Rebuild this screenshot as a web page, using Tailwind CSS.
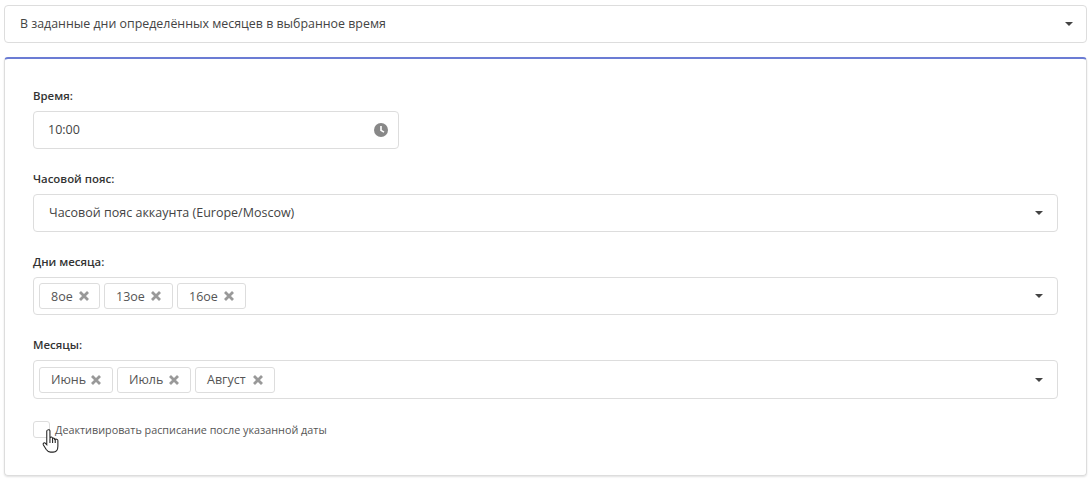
<!DOCTYPE html>
<html lang="en">
<head>
  <meta charset="UTF-8">
  <title>Расписание</title>
  <script src="https://cdn.jsdelivr.net/npm/@tailwindcss/browser@4"></script>
</head>
<body class="bg-white h-[481px] overflow-hidden font-['Open_Sans',sans-serif] text-[12.5px] text-[#444]">
  <div class="pl-[4px] pr-[4px] pt-[5px]">
    <!-- schedule type -->
    <div class="h-[38px] border border-[#ddd] rounded-[4px] flex items-center justify-between pl-[15px] pr-[13px]">
      <span class="text-[12.4px]">В заданные дни определённых месяцев в выбранное время</span>
      <span class="w-0 h-0 border-x-[4px] border-x-transparent border-t-[4px] border-t-[#444]"></span>
    </div>

    <div class="relative mt-[14px] h-[419px] border border-[#ddd] border-t-2 border-t-[#6b7cd4] rounded-[4px] shadow-[0_1px_2px_rgba(0,0,0,0.12)] pl-[28px] pr-[28px] pt-[29px]">
      <div class="h-[16px] leading-[15px] font-semibold text-[11.4px] text-[#333]">Время:</div>
      <div class="mt-[7px] w-[366px] h-[38px] border border-[#ddd] rounded-[4px] flex items-center justify-between pl-[14px] pr-[10px]">
        <span class="pt-[1px]">10:00</span>
        <svg class="w-[14px] h-[14px]" viewBox="0 0 13 13"><circle cx="6.5" cy="6.5" r="6.5" fill="#888"/><path d="M6.5 2.800V6.800L9.300 8.500" fill="none" stroke="#fff" stroke-width="1.500"/></svg>
      </div>

      <div class="mt-[22px] h-[16px] leading-[15px] font-semibold text-[11.4px] text-[#333]">Часовой пояс:</div>
      <div class="mt-[7px] h-[38px] border border-[#ddd] rounded-[4px] flex items-center justify-between pl-[15px] pr-[14px]">
        <span class="pt-[1px]">Часовой пояс аккаунта (Europe/Moscow)</span>
        <span class="w-0 h-0 border-x-[4px] border-x-transparent border-t-[4px] border-t-[#444]"></span>
      </div>

      <div class="mt-[22px] h-[16px] leading-[15px] font-semibold text-[11.4px] text-[#333]">Дни месяца:</div>
      <div class="mt-[7px] h-[38px] border border-[#ddd] rounded-[4px] flex items-center justify-between pl-[5px] pr-[14px]">
        <div class="flex gap-[4px]">
          <span class="w-[61px] h-[26px] border border-[#ddd] rounded-[3px] flex items-center justify-between pl-[11px] pr-[10px] text-[#555]"><span class="pt-[2px]">8ое</span> <svg class="w-[10px] h-[10px]" viewBox="0 0 10 10"><path d="M1 1L9 9M9 1L1 9" stroke="#999" stroke-width="2.800"/></svg></span>
          <span class="w-[69px] h-[26px] border border-[#ddd] rounded-[3px] flex items-center justify-between pl-[11px] pr-[11px] text-[#555]"><span class="pt-[2px]">13ое</span> <svg class="w-[10px] h-[10px]" viewBox="0 0 10 10"><path d="M1 1L9 9M9 1L1 9" stroke="#999" stroke-width="2.800"/></svg></span>
          <span class="w-[69px] h-[26px] border border-[#ddd] rounded-[3px] flex items-center justify-between pl-[11px] pr-[11px] text-[#555]"><span class="pt-[2px]">16ое</span> <svg class="w-[10px] h-[10px]" viewBox="0 0 10 10"><path d="M1 1L9 9M9 1L1 9" stroke="#999" stroke-width="2.800"/></svg></span>
        </div>
        <span class="w-0 h-0 border-x-[4px] border-x-transparent border-t-[4px] border-t-[#444]"></span>
      </div>

      <div class="mt-[22px] h-[16px] leading-[15px] font-semibold text-[11.4px] text-[#333]">Месяцы:</div>
      <div class="mt-[7px] h-[39px] border border-[#ddd] rounded-[4px] flex items-center justify-between pl-[5px] pr-[14px]">
        <div class="flex gap-[4px]">
          <span class="w-[74px] h-[26px] border border-[#ddd] rounded-[3px] flex items-center justify-between pl-[11px] pr-[11px] text-[#555]"><span class="pt-[2px]">Июнь</span> <svg class="w-[10px] h-[10px]" viewBox="0 0 10 10"><path d="M1 1L9 9M9 1L1 9" stroke="#999" stroke-width="2.800"/></svg></span>
          <span class="w-[74px] h-[26px] border border-[#ddd] rounded-[3px] flex items-center justify-between pl-[11px] pr-[11px] text-[#555]"><span class="pt-[2px]">Июль</span> <svg class="w-[10px] h-[10px]" viewBox="0 0 10 10"><path d="M1 1L9 9M9 1L1 9" stroke="#999" stroke-width="2.800"/></svg></span>
          <span class="w-[80px] h-[26px] border border-[#ddd] rounded-[3px] flex items-center justify-between pl-[11px] pr-[11px] text-[#555]"><span class="pt-[2px]">Август</span> <svg class="w-[10px] h-[10px]" viewBox="0 0 10 10"><path d="M1 1L9 9M9 1L1 9" stroke="#999" stroke-width="2.800"/></svg></span>
        </div>
        <span class="w-0 h-0 border-x-[4px] border-x-transparent border-t-[4px] border-t-[#444]"></span>
      </div>

      <div class="mt-[22px] flex items-center gap-[5px]">
        <span class="w-[17px] h-[17px] border border-[#ddd] rounded-[3px]"></span>
        <span class="pt-[1px] text-[10.8px] text-[#555]">Деактивировать расписание после указанной даты</span>
      </div>

      <!-- mouse pointer from the screen capture -->
      <svg class="absolute left-[37px] top-[369px] w-[18px] h-[26px]" viewBox="0 0 17 24"><path d="M5.500 1.500C6.500 1 7.500 1.500 7.500 2.500V9.500L8 8.500C9 8 10 8.300 10 9.500C11 9 12 9.300 12 10.500C13 10 15 10.300 15 11.500V17C15 20 13.500 22.500 10.500 22.500H8C6 22.500 5 21.500 4 20L1.200 15.500C.6 14 2.300 13 3.500 14.500L4.500 15.500V2.500C4.500 2 5 1.700 5.500 1.500Z" fill="#fff" stroke="#222" stroke-width="1"/><path d="M7.500 9.500V14M10 9.500V14M12.500 10.500V14" stroke="#222" stroke-width="1"/></svg>
    </div>
  </div>
</body>
</html>
